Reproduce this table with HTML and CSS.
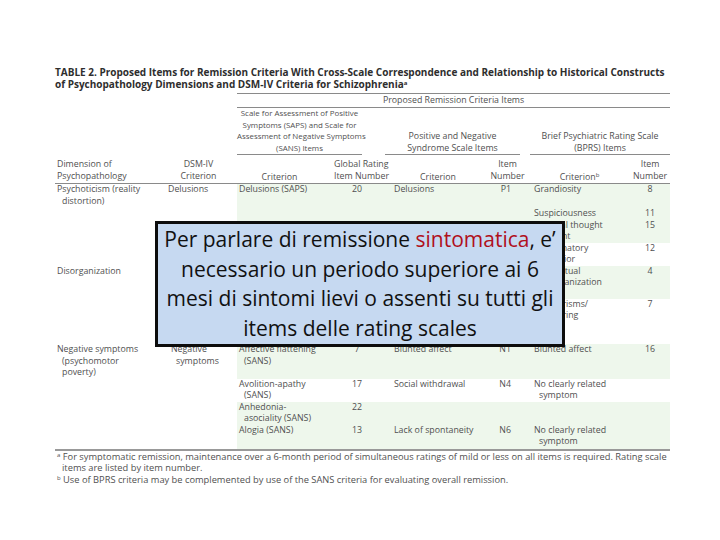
FILE: index.html
```html
<!DOCTYPE html>
<html lang="it">
<head>
<meta charset="utf-8">
<link rel="stylesheet" href="styles.css">
</head>
<body>
<div class="page">
  <div class="doc">
    <div class="title">TABLE 2. Proposed Items for Remission Criteria With Cross-Scale Correspondence and Relationship to Historical Constructs<br>of Psychopathology Dimensions and DSM-IV Criteria for Schizophrenia<sup>a</sup></div>
    <table class="tbl">
      <colgroup>
        <col class="w1"><col class="w2"><col class="w3"><col class="w4"><col class="w5"><col class="w6"><col class="w7"><col class="w8">
      </colgroup>
      <tr class="h0">
        <td colspan="2"></td>
        <td colspan="6" class="proposed">Proposed Remission Criteria Items</td>
      </tr>
      <tr class="h1">
        <td colspan="2"></td>
        <td colspan="2" class="grp"><div class="gl g-saps">Scale for Assessment of Positive<br>Symptoms (SAPS) and Scale for<br>Assessment of Negative Symptoms<br>(SANS) Items</div></td>
        <td colspan="2" class="grp"><div class="gl g-panss">Positive and Negative<br>Syndrome Scale Items</div></td>
        <td colspan="2" class="grp"><div class="gl g-bprs">Brief Psychiatric Rating Scale<br>(BPRS) Items</div></td>
      </tr>
      <tr class="h2">
        <td class="l">Dimension of<br>Psychopathology</td>
        <td class="c">DSM-IV<br>Criterion</td>
        <td class="c bot">Criterion</td>
        <td class="c h4">Global Rating<br>Item Number</td>
        <td class="c bot h5">Criterion</td>
        <td class="c h6">Item<br>Number</td>
        <td class="c bot h7">Criterion<sup>b</sup></td>
        <td class="c h8">Item<br>Number</td>
      </tr>

      <tr class="r r1a green">
        <td rowspan="3" class="dim">Psychoticism (reality<br><span class="ind">distortion)</span></td>
        <td rowspan="3" class="dsm">Delusions</td>
        <td rowspan="3" class="crit">Delusions (SAPS)</td>
        <td rowspan="3" class="n4">20</td>
        <td class="pc">Delusions</td>
        <td class="n6">P1</td>
        <td class="bc">Grandiosity</td>
        <td class="n8">8</td>
      </tr>
      <tr class="r r1b green">
        <td class="pc"></td><td class="n6"></td>
        <td class="bc">Suspiciousness</td>
        <td class="n8">11</td>
      </tr>
      <tr class="r r1c green">
        <td class="pc">Unusual thought</td>
        <td class="n6">G9</td>
        <td class="bc">Unusual thought<br><span class="ind">content</span></td>
        <td class="n8">15</td>
      </tr>
      <tr class="r r2">
        <td></td><td></td><td class="crit"></td><td class="n4"></td><td class="pc"></td><td class="n6"></td>
        <td class="bc">Hallucinatory<br><span class="ind">behavior</span></td>
        <td class="n8">12</td>
      </tr>
      <tr class="r r3 green">
        <td class="dim">Disorganization</td>
        <td></td><td class="crit"></td><td class="n4"></td><td class="pc"></td><td class="n6"></td>
        <td class="bc">Conceptual<br><span class="ind">disorganization</span></td>
        <td class="n8">4</td>
      </tr>
      <tr class="r r4">
        <td></td><td></td><td class="crit"></td><td class="n4"></td><td class="pc"></td><td class="n6"></td>
        <td class="bc">Mannerisms/<br><span class="ind">posturing</span></td>
        <td class="n8">7</td>
      </tr>
      <tr class="r r5 green">
        <td class="dim">Negative symptoms<br><span class="ind">(psychomotor</span><br><span class="ind">poverty)</span></td>
        <td class="dsm neg">Negative<br><span class="ind">symptoms</span></td>
        <td class="crit">Affective flattening<br><span class="ind">(SANS)</span></td>
        <td class="n4">7</td>
        <td class="pc">Blunted affect</td>
        <td class="n6">N1</td>
        <td class="bc">Blunted affect</td>
        <td class="n8">16</td>
      </tr>
      <tr class="r r6">
        <td></td><td></td>
        <td class="crit">Avolition-apathy<br><span class="ind">(SANS)</span></td>
        <td class="n4">17</td>
        <td class="pc">Social withdrawal</td>
        <td class="n6">N4</td>
        <td class="bc">No clearly related<br><span class="ind">symptom</span></td>
        <td class="n8"></td>
      </tr>
      <tr class="r r7 green">
        <td></td><td></td>
        <td class="crit">Anhedonia-<br><span class="ind">asociality (SANS)</span></td>
        <td class="n4">22</td>
        <td class="pc"></td>
        <td class="n6"></td>
        <td class="bc"></td>
        <td class="n8"></td>
      </tr>
      <tr class="r r8 green last">
        <td></td><td></td>
        <td class="crit">Alogia (SANS)</td>
        <td class="n4">13</td>
        <td class="pc">Lack of spontaneity</td>
        <td class="n6">N6</td>
        <td class="bc">No clearly related<br><span class="ind">symptom</span></td>
        <td class="n8"></td>
      </tr>
    </table>
    <div class="notes">
      <p><sup>a</sup> For symptomatic remission, maintenance over a 6-month period of simultaneous ratings of mild or less on all items is required. Rating scale<br><span class="ind2">items are listed by item number.</span></p>
      <p><sup>b</sup> Use of BPRS criteria may be complemented by use of the SANS criteria for evaluating overall remission.</p>
    </div>
  </div>

  <div class="callout">Per parlare di remissione <span class="red">sintomatica</span>, e’<br>necessario un periodo superiore ai 6<br>mesi di sintomi lievi o assenti su tutti gli<br>items delle rating scales</div>
</div>
</body>
</html>
```
FILE: styles.css
```css
html, body {
  margin: 0;
  padding: 0;
  background: #ffffff;
}
.page {
  position: relative;
  width: 720px;
  height: 540px;
  overflow: hidden;
  background: #ffffff;
}
.doc {
  padding: 66px 0 0 55px;
  width: 615px;
  font-family: "Open Sans", Lato, sans-serif;
  color: #505050;
}
.title {
  font-weight: bold;
  font-size: 10px;
  line-height: 12px;
  color: #2e2e2e;
  white-space: nowrap;
  height: 27px;
}
.title sup, .tbl sup, .notes sup {
  font-size: 6px;
  line-height: 0;
  vertical-align: 3px;
}
.tbl {
  border-collapse: separate;
  border-spacing: 0;
  table-layout: fixed;
  width: 615px;
  font-size: 8.8px;
  line-height: 11.5px;
  color: #505050;
  white-space: nowrap;
}
.w1 { width: 105px; }
.w2 { width: 77px; }
.w3 { width: 85px; }
.w4 { width: 58px; }
.w5 { width: 102px; }
.w6 { width: 43px; }
.w7 { width: 100px; }
.w8 { width: 45px; }
.tbl td {
  padding: 0;
  vertical-align: top;
}
.h0 td { height: 13px; }
.tbl td.proposed {
  border-top: 1px solid #8a8a8a;
  border-bottom: 1px solid #8a8a8a;
  text-align: center;
  vertical-align: middle;
}
.h1 td { height: 46px; }
.tbl td.grp { vertical-align: bottom; }
.gl {
  text-align: center;
  border-bottom: 1px solid #8a8a8a;
}
.g-saps { margin: 0 18px 0 0; font-size: 7.9px; }
.g-panss { margin: 0 5px 0 5px; }
.g-bprs { margin: 0 0 0 5px; }
.h2 td {
  height: 24px;
  padding-top: 4px;
  border-bottom: 1px solid #8a8a8a;
}
.tbl .h2 td.bot { vertical-align: bottom; }
.tbl .h2 td.l { text-align: left; padding-left: 2px; }
.tbl .h2 td.c { text-align: center; }
.tbl .h2 td.h4 { padding-left: 12px; }
.tbl .h2 td.h5 { padding-left: 14px; }
.tbl .h2 td.h6 { padding-left: 8px; }
.tbl .h2 td.h7 { padding-left: 9px; }
.tbl .h2 td.h8 { padding-left: 5px; }

.ind { padding-left: 5px; }
.r td.dim { padding-left: 2px; }
.r td.dsm { padding-left: 8px; }
.r td.dsm.neg { padding-left: 11px; }
.r td.crit { padding-left: 2px; }
.r td.n4 { text-align: center; padding-left: 12px; }
.r td.pc { padding-left: 14px; }
.r td.n6 { text-align: right; padding-right: 14px; }
.r td.bc { padding-left: 9px; }
.r td.n8 { text-align: center; padding-left: 5px; }

.green td.crit, .green td.n4, .green td.pc, .green td.n6, .green td.bc, .green td.n8 {
  background: #eef7ec;
}
.r1a td { height: 24px; }
.r1b td { height: 11.5px; }
.r1c td { height: 23px; }
.r2 td { height: 22px; }
.r3 td { height: 33px; }
.r4 td { height: 45.5px; }
.r5 td { height: 34.5px; }
.r6 td { height: 23px; }
.r7 td { height: 22.5px; }
.r8 td { height: 24px; }
.last td { border-bottom: 2px solid #999; }

.notes {
  font-size: 9.3px;
  line-height: 11.5px;
  color: #505050;
  white-space: nowrap;
}
.notes p { margin: 0; padding-left: 2px; }
.ind2 { padding-left: 5px; }

.callout {
  position: absolute;
  left: 155px;
  top: 221px;
  width: 410px;
  height: 126px;
  box-sizing: border-box;
  border: 3px solid #0d0d0d;
  background: #c6d9f1;
  font-family: "Open Sans", Lato, sans-serif;
  font-size: 21px;
  line-height: 29.5px;
  color: #111;
  text-align: center;
  padding: 1px 0 0;
  white-space: nowrap;
}
.red { color: #b0101c; }
```
